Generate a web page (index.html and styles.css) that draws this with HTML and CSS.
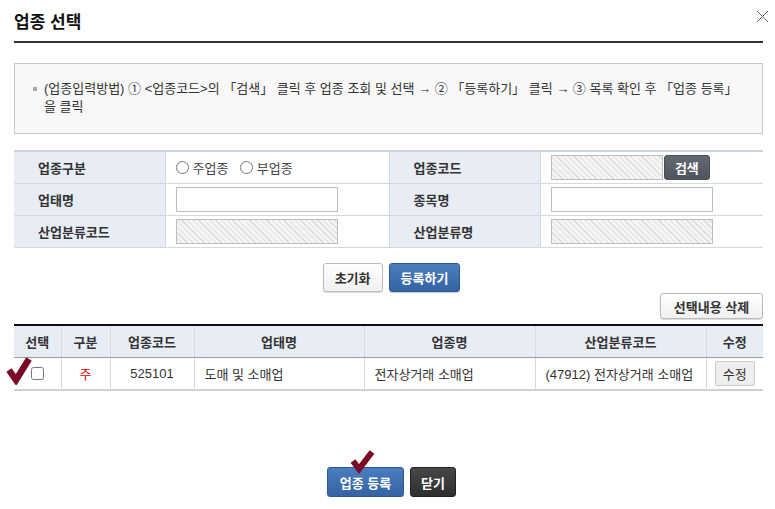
FILE: index.html
```html
<!DOCTYPE html>
<html lang="ko">
<head>
    <meta charset="UTF-8">
    <meta name="viewport" content="width=device-width, initial-scale=1.0">
    <title>업종 선택</title>
    <link rel="stylesheet" href="styles.css">
</head>
<body>
    <div class="popup">
        <div class="popup-header">
            <h1>업종 선택</h1>
            <button class="btn-close" title="닫기">
                <svg width="13" height="13" viewBox="0 0 13 13"><path d="M1 1 L12 12 M12 1 L1 12" stroke="#666" stroke-width="1" fill="none"/></svg>
            </button>
        </div>

        <div class="info-box">
            <p><span class="bullet"></span>(업종입력방법) ① &lt;업종코드&gt;의 「검색」 클릭 후 업종 조회 및 선택 → ② 「등록하기」 클릭 → ③ 목록 확인 후 「업종 등록」 을 클릭</p>
        </div>

        <table class="form-table">
            <colgroup>
                <col style="width:151px">
                <col style="width:224px">
                <col style="width:151px">
                <col>
            </colgroup>
            <tr>
                <th>업종구분</th>
                <td>
                    <label class="radio"><input type="radio" name="kind"> 주업종</label>
                    <label class="radio"><input type="radio" name="kind"> 부업종</label>
                </td>
                <th>업종코드</th>
                <td>
                    <input type="text" class="inp disabled" readonly>
                    <button class="btn btn-dark btn-sm">검색</button>
                </td>
            </tr>
            <tr>
                <th>업태명</th>
                <td><input type="text" class="inp"></td>
                <th>종목명</th>
                <td><input type="text" class="inp"></td>
            </tr>
            <tr>
                <th>산업분류코드</th>
                <td><input type="text" class="inp disabled" readonly></td>
                <th>산업분류명</th>
                <td><input type="text" class="inp disabled" readonly></td>
            </tr>
        </table>

        <div class="btn-row">
            <button class="btn btn-white">초기화</button>
            <button class="btn btn-blue">등록하기</button>
        </div>

        <div class="list-tools">
            <button class="btn btn-white btn-del">선택내용 삭제</button>
        </div>

        <div class="list-wrap">
            <table class="list-table">
                <colgroup>
                    <col style="width:47px">
                    <col style="width:49px">
                    <col style="width:84px">
                    <col style="width:170px">
                    <col style="width:171px">
                    <col style="width:171px">
                    <col>
                </colgroup>
                <thead>
                    <tr>
                        <th>선택</th>
                        <th>구분</th>
                        <th>업종코드</th>
                        <th>업태명</th>
                        <th>업종명</th>
                        <th>산업분류코드</th>
                        <th>수정</th>
                    </tr>
                </thead>
                <tbody>
                    <tr>
                        <td class="c"><input type="checkbox"></td>
                        <td class="c red">주</td>
                        <td class="c">525101</td>
                        <td>도매 및 소매업</td>
                        <td>전자상거래 소매업</td>
                        <td>(47912) 전자상거래 소매업</td>
                        <td class="c"><button class="btn-edit">수정</button></td>
                    </tr>
                </tbody>
            </table>
            <svg class="check-mark mark-row" width="26" height="30" viewBox="0 0 26 30"><polyline points="3,15 10,25 23,4" fill="none" stroke="#7b0a26" stroke-width="6.5"/></svg>
        </div>

        <div class="btn-row bottom">
            <div class="mark-holder">
                <button class="btn btn-blue btn-lg">업종 등록</button>
                <svg class="check-mark mark-btn" width="26" height="26" viewBox="0 0 26 26"><polyline points="3,13 9,21 22,4" fill="none" stroke="#7b0a26" stroke-width="6"/></svg>
            </div>
            <button class="btn btn-dark btn-lg">닫기</button>
        </div>
    </div>
</body>
</html>
```

FILE: styles.css
```css
body {
    margin: 0;
    padding: 0;
    background-color: #fff;
    font-family: "Liberation Sans", "Noto Sans CJK KR", sans-serif;
    font-size: 12px;
    color: #333;
}

.popup {
    padding: 0 12px 0 14px;
}

.popup-header {
    display: flex;
    justify-content: space-between;
    align-items: center;
    height: 41px;
    border-bottom: 2px solid #333;
}

.popup-header h1 {
    margin: 0;
    font-size: 17px;
    font-weight: bold;
    color: #111;
}

.btn-close {
    border: none;
    background: none;
    padding: 0;
    margin: -6px -6px 0 0;
    cursor: pointer;
}

.info-box {
    margin-top: 20px;
    height: 69px;
    border: 1px solid #c8c8c8;
    background-color: #f8f8f8;
    padding: 0 14px 0 18px;
}

.info-box p {
    margin: 16px 0 0;
    padding-left: 11px;
    text-indent: -11px;
    line-height: 18px;
    font-size: 13px;
}

.bullet {
    display: inline-block;
    width: 4px;
    height: 4px;
    background-color: #aaa;
    vertical-align: middle;
    margin: -2px 7px 0 0;
}

.form-table {
    width: 100%;
    margin-top: 16px;
    border-collapse: collapse;
    border-top: 2px solid #cdd4df;
    table-layout: fixed;
}

.form-table th,
.form-table td {
    height: 31px;
    padding: 0;
    border-bottom: 1px solid #d3d8e0;
}

.form-table th {
    background-color: #e8ecf4;
    text-align: left;
    padding-left: 24px;
    font-size: 13px;
    font-weight: bold;
    color: #333;
}

.form-table td {
    padding-left: 10px;
    border-left: 1px solid #d3d8e0;
    border-right: 1px solid #d3d8e0;
}

.form-table td:last-child {
    border-right: none;
}

.radio {
    display: inline-flex;
    align-items: center;
    margin-right: 8px;
    font-size: 13px;
    color: #444;
}

.radio input {
    margin: 0 4px 0 0;
    width: 13px;
    height: 13px;
}

.inp {
    box-sizing: border-box;
    width: 162px;
    height: 25px;
    border: 1px solid #bdbdbd;
    background-color: #fff;
    vertical-align: middle;
    margin: 0;
}

.inp.disabled {
    width: 112px;
    background: repeating-linear-gradient(45deg, #f4f4f4 0 3px, #dcdcdc 3px 4px);
}

.form-table tr:last-child .inp.disabled {
    width: 162px;
}

.btn {
    font-family: "Liberation Sans", "Noto Sans CJK KR", sans-serif;
    font-size: 13px;
    font-weight: bold;
    border-radius: 3px;
    cursor: pointer;
    padding: 0 11px;
    height: 29px;
}

.btn-sm {
    height: 25px;
    width: 46px;
    padding: 0;
    margin-left: -2px;
    vertical-align: middle;
}

.btn-white {
    background: linear-gradient(#fff, #f0f0f0);
    border: 1px solid #bbb;
    color: #333;
    box-shadow: 0 1px 1px rgba(0, 0, 0, 0.15);
}

.btn-blue {
    background: linear-gradient(#4a7dbf, #3563a3);
    border: 1px solid #2f5a94;
    color: #fff;
    box-shadow: 0 1px 1px rgba(0, 0, 0, 0.2);
}

.btn-dark {
    background: linear-gradient(#636872, #50545c);
    border: 1px solid #4a4d54;
    color: #fff;
}

.btn-row {
    display: flex;
    justify-content: center;
    gap: 6px;
    margin-top: 15px;
    padding-left: 6px;
}

.list-tools {
    display: flex;
    justify-content: flex-end;
    margin-top: 1px;
}

.btn-del {
    height: 26px;
    width: 103px;
    padding: 0;
}

.list-wrap {
    position: relative;
    margin-top: 5px;
}

.list-table {
    width: 100%;
    border-collapse: collapse;
    table-layout: fixed;
    border-top: 2px solid #111;
    border-bottom: 2px solid #d0d0d0;
}

.list-table th,
.list-table td {
    height: 31px;
    padding: 0 10px;
    border-left: 1px solid #d6dbe3;
    font-size: 13px;
    white-space: nowrap;
}

.list-table th:first-child,
.list-table td:first-child {
    border-left: none;
}

.list-table th {
    background-color: #e8ecf4;
    font-weight: bold;
    border-bottom: 1px solid #9a9a9a;
    color: #333;
}

.list-table td {
    color: #333;
}

.list-table td.c {
    text-align: center;
    padding: 0;
}

.list-table td.red {
    color: #e00000;
}

.list-table input[type="checkbox"] {
    width: 13px;
    height: 13px;
    margin: 3px 0 0;
}

.btn-edit {
    font-family: "Liberation Sans", "Noto Sans CJK KR", sans-serif;
    font-size: 13px;
    height: 25px;
    width: 40px;
    padding: 0;
    border: 1px solid #ccc;
    border-radius: 2px;
    background-color: #eeeeee;
    color: #333;
}

.check-mark {
    position: absolute;
}

.mark-row {
    left: -8px;
    top: 31px;
}

.btn-row.bottom {
    margin-top: 76px;
}

.btn-lg {
    height: 30px;
}

.btn-row.bottom .btn-blue {
    width: 77px;
    padding: 0;
}

.btn-row.bottom .btn-dark {
    width: 46px;
    padding: 0;
    background: linear-gradient(#474747, #2e2e2e);
    border-color: #222;
}

.mark-holder {
    position: relative;
}

.mark-btn {
    left: 23px;
    top: -19px;
}
```
